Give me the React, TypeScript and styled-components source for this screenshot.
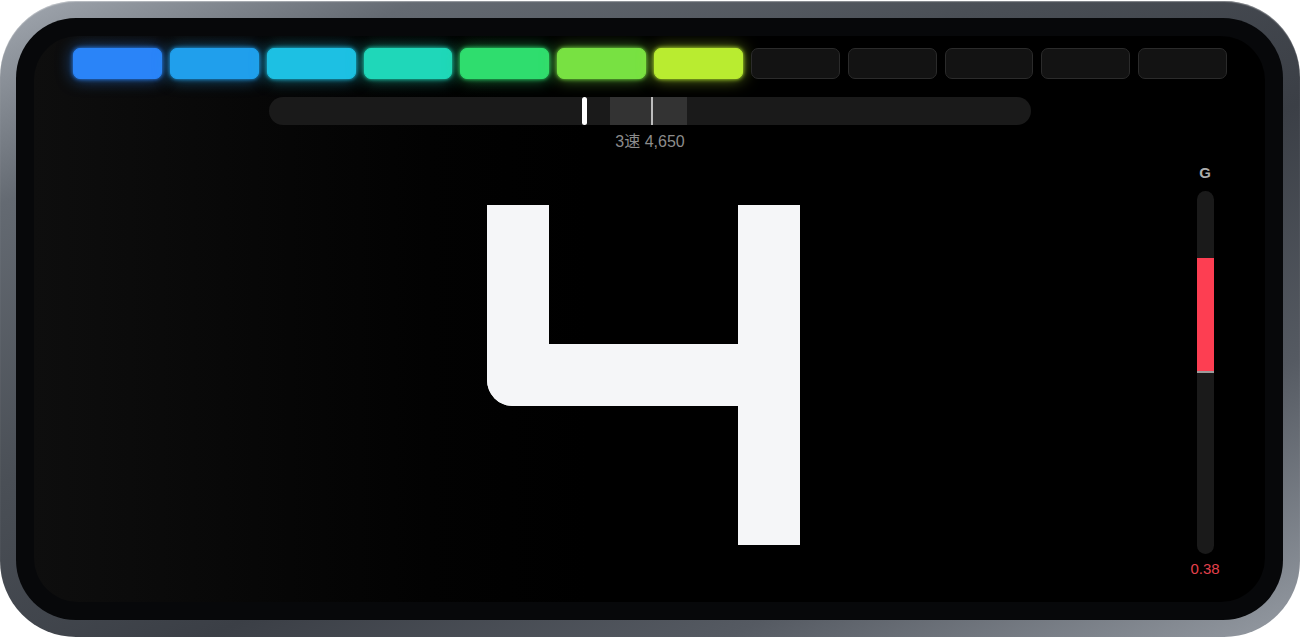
import styled, { createGlobalStyle } from 'styled-components';

const GlobalStyle = createGlobalStyle`
  html, body {
    margin: 0;
    padding: 0;
    background: #ffffff;
  }
  * {
    box-sizing: border-box;
  }
`;

const SEGMENTS = [
  '#2a84f8',
  '#209fec',
  '#1dc0e3',
  '#1fd7b9',
  '#2fdd6e',
  '#78e142',
  '#b9ec30',
];
const TOTAL = 12;

const RPM_MARKER = 0.413;
const ZONE_FROM = 0.448;
const ZONE_TO = 0.548;
const ZONE_LINE = 0.501;

const G_VALUE = 0.38;
const G_MAX = 0.6;
const TRACK_HEIGHT = 363;

const Device = styled.div`
  width: 1300px;
  height: 636px;
  margin-top: 1px;
  padding: 17px 17px 17px 16px;
  border-radius: 76px;
  background: linear-gradient(
    to bottom right,
    #a3a9b1 0%,
    #646a72 16%,
    #4a4f56 38%,
    #3b3f46 58%,
    #555a62 78%,
    #959ba3 100%
  );
  box-shadow: inset 0 1px 1px rgba(255, 255, 255, 0.35);
`;

const Bezel = styled.div`
  height: 100%;
  padding: 18px;
  border-radius: 60px;
  background: #07080a;
`;

const Screen = styled.div`
  height: 100%;
  display: flex;
  flex-direction: column;
  padding: 12px 38px 0 39px;
  border-radius: 44px;
  overflow: hidden;
  background: linear-gradient(90deg, #0e0e0e 0%, #070707 18%, #020202 32%, #000 45%);
  font-family: 'Liberation Sans', 'Noto Sans CJK SC', sans-serif;
`;

const SegmentRow = styled.div`
  display: grid;
  grid-template-columns: repeat(${TOTAL}, 1fr);
  gap: 8px;
  height: 31px;
`;

const Segment = styled.div<{ $color?: string }>`
  border-radius: 7px;
  ${(p) =>
    p.$color
      ? `
    background: ${p.$color};
    border: 1px solid ${p.$color};
    box-shadow: 0 0 16px ${p.$color}99, 0 0 4px ${p.$color};
  `
      : `
    background: #131313;
    border: 1px solid #2b2b2b;
  `}
`;

const RpmTrack = styled.div`
  position: relative;
  width: 762px;
  height: 28px;
  margin: 18px auto 0;
  border-radius: 14px;
  background: #1a1a1a;
  overflow: hidden;
`;

const ShiftZone = styled.div`
  position: absolute;
  top: 0;
  bottom: 0;
  background: #333333;
`;

const ZoneLine = styled.div`
  position: absolute;
  top: 0;
  bottom: 0;
  width: 2px;
  background: #bdbdbd;
`;

const Marker = styled.div`
  position: absolute;
  top: 0;
  bottom: 0;
  width: 5px;
  margin-left: -2px;
  border-radius: 3px;
  background: #ffffff;
`;

const ShiftLabel = styled.div`
  margin-top: 7px;
  text-align: center;
  font-size: 16px;
  line-height: 20px;
  color: #8c8c8c;
`;

const Body = styled.div`
  flex: 1;
  display: grid;
  grid-template-columns: 1fr auto 1fr;
`;

const GearDigit = styled.div`
  grid-column: 2;
  align-self: center;
  margin: 0 13px 5px 0;
  display: grid;
  grid-template-columns: 62px 189px 62px;
  grid-template-rows: 139px 62px 139px;
`;

const Stroke = styled.div<{ $col: string; $row: string; $round?: boolean }>`
  grid-column: ${(p) => p.$col};
  grid-row: ${(p) => p.$row};
  background: #f5f6f8;
  border-bottom-left-radius: ${(p) => (p.$round ? '26px' : '0')};
`;

const GMeter = styled.div`
  grid-column: 3;
  justify-self: end;
  align-self: start;
  width: 30px;
  margin-right: 7px;
  padding-top: 12px;
  display: flex;
  flex-direction: column;
  align-items: center;
`;

const GLabel = styled.div`
  font-size: 15px;
  line-height: 18px;
  font-weight: 700;
  color: #adadad;
`;

const GTrack = styled.div`
  position: relative;
  width: 17px;
  height: ${TRACK_HEIGHT}px;
  margin-top: 9px;
  border-radius: 9px;
  background: #1a1a1a;
  overflow: hidden;
`;

const GFill = styled.div`
  position: absolute;
  left: 0;
  right: 0;
  bottom: 50%;
  background: #fd3e52;
  border-bottom: 2px solid #9a9a9a;
`;

const GValue = styled.div`
  margin-top: 6px;
  font-size: 15px;
  line-height: 18px;
  color: #e5404c;
`;

const pct = (v: number) => `${(v * 100).toFixed(2)}%`;

export default function App() {
  const fillHeight = (G_VALUE / G_MAX) * (TRACK_HEIGHT / 2);
  return (
    <>
      <GlobalStyle />
      <Device>
        <Bezel>
          <Screen>
            <SegmentRow>
              {Array.from({ length: TOTAL }, (_, i) => (
                <Segment key={i} $color={SEGMENTS[i]} />
              ))}
            </SegmentRow>
            <RpmTrack>
              <ShiftZone style={{ left: pct(ZONE_FROM), width: pct(ZONE_TO - ZONE_FROM) }} />
              <ZoneLine style={{ left: pct(ZONE_LINE) }} />
              <Marker style={{ left: pct(RPM_MARKER) }} />
            </RpmTrack>
            <ShiftLabel>3速 4,650</ShiftLabel>
            <Body>
              <GearDigit role="img" aria-label="4">
                <Stroke $col="1" $row="1 / 3" $round />
                <Stroke $col="1 / 4" $row="2" $round />
                <Stroke $col="3" $row="1 / 4" />
              </GearDigit>
              <GMeter>
                <GLabel>G</GLabel>
                <GTrack>
                  <GFill style={{ height: fillHeight }} />
                </GTrack>
                <GValue>{G_VALUE.toFixed(2)}</GValue>
              </GMeter>
            </Body>
          </Screen>
        </Bezel>
      </Device>
    </>
  );
}
